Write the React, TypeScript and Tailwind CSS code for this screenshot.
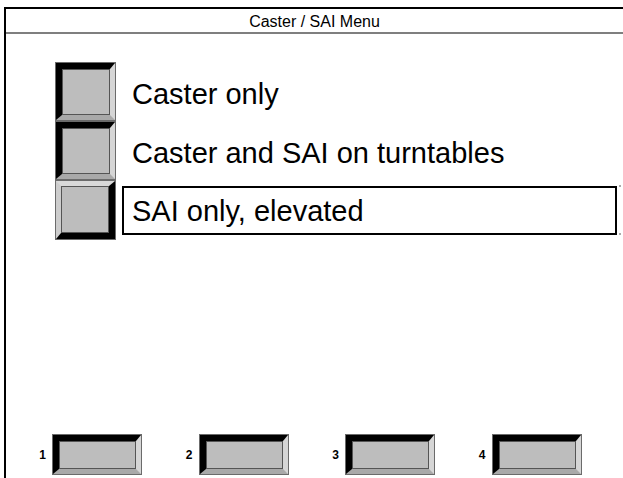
import React from 'react';

const Bevel = ({ raised, className }: { raised?: boolean; className: string }) => (
  <div className={`border border-[#6b6b6b] ${className}`}>
    <div
      className={
        raised
          ? 'h-full border-t-[5px] border-l-[5px] border-b-[6px] border-r-[6px] border-t-[#d9d9d9] border-l-[#cdcdcd] border-b-black border-r-black'
          : 'h-full border-t-[6px] border-l-[6px] border-b-[5px] border-r-[5px] border-t-black border-l-black border-b-[#a9a9a9] border-r-[#d6d6d6]'
      }
    >
      <div className="h-full bg-[#bdbdbd] border border-[#555]" />
    </div>
  </div>
);

const App = () => {
  const items = ['Caster only', 'Caster and SAI on turntables', 'SAI only, elevated'];
  const selected = 2;

  return (
    <div className="w-[623px] h-[478px] bg-white overflow-hidden pt-[7px] text-black" style={{ fontFamily: '"Liberation Sans", Arial, sans-serif' }}>
      <div className="ml-[4px] h-[471px] border-t-2 border-l-2 border-black flex flex-col">
        {/* Title */}
        <div className="h-[25px] border-b-2 border-[#7f7f7f] flex items-center justify-center pt-[2px] text-[16px] leading-none">
          Caster / SAI Menu
        </div>

        {/* Menu */}
        <div className="flex flex-col pl-[49px] pt-[28px]">
          {items.map((label, i) => (
            <div key={label} className="flex items-center">
              <Bevel raised={i === selected} className={i === selected ? 'w-[61px] h-[60px]' : 'w-[61px] h-[59px]'} />
              {i === selected ? (
                <>
                  <div className="ml-[6px] w-[495px] h-[49px] border-2 border-black pl-[8px] pt-[2px] flex items-center text-[29px] leading-none">
                    {label}
                  </div>
                  <div className="ml-[2px] w-[2px] h-[50px] flex flex-col justify-between">
                    <div className="h-[2px] bg-[#aaa]" />
                    <div className="h-[2px] bg-[#aaa]" />
                  </div>
                </>
              ) : (
                <div className="ml-[16px] mt-[6px] text-[29px] leading-none">{label}</div>
              )}
            </div>
          ))}
        </div>

        {/* Softkeys */}
        <div className="mt-auto flex pl-[31px] pb-[3px]">
          {[1, 2, 3, 4].map((n) => (
            <div key={n} className="w-[148px] flex items-center">
              <span className="w-[9px] text-right text-[12px] font-bold leading-none mr-[6px]">{n}</span>
              <Bevel className="w-[90px] h-[41px]" />
            </div>
          ))}
        </div>
      </div>
    </div>
  );
};

export default App;
